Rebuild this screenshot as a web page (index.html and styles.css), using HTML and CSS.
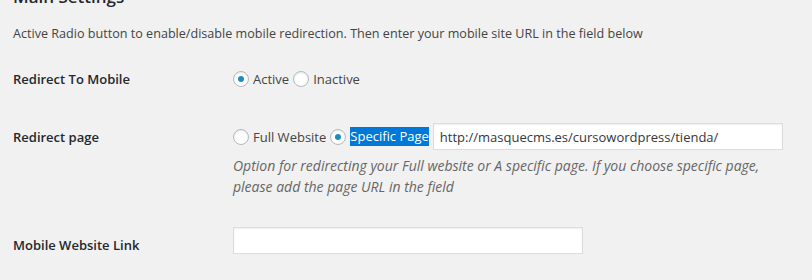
FILE: index.html
```html
<!DOCTYPE html>
<html>
    <head>
        <link rel="stylesheet" href="styles.css">
    </head>

    <body>
        <div class="wrap">
            <h2 class="title">Main Settings</h2>
            <p class="intro">
                Active Radio button to enable/disable mobile redirection. Then enter your mobile site URL in the field below
            </p>

            <table class="form-table">
                <tr>
                    <th>Redirect To Mobile</th>
                    <td>
                        <div class="line">
                            <label class="choice"><input type="radio" name="redirect" checked>Active</label>
                            <label class="choice"><input type="radio" name="redirect">Inactive</label>
                        </div>
                    </td>
                </tr>
                <tr>
                    <th>Redirect page</th>
                    <td>
                        <div class="line">
                            <label class="choice"><input type="radio" name="page">Full Website</label>
                            <label class="choice"><input type="radio" name="page" checked><span class="picked">Specific Page</span></label>
                            <input type="text" class="url" value="http://masquecms.es/cursowordpress/tienda/">
                        </div>
                        <p class="description">
                            Option for redirecting your Full website or A specific page. If you choose specific page,
                            please add the page URL in the field
                        </p>
                    </td>
                </tr>
                <tr>
                    <th>Mobile Website Link</th>
                    <td>
                        <input type="text" class="url">
                    </td>
                </tr>
            </table>
        </div>
    </body>
</html>
```

FILE: styles.css
```css
body {
    margin: 0;
    background: #f1f1f1;
    color: #444;
    font-family: "Open Sans", "Noto Sans", sans-serif;
    font-size: 13px;
    line-height: 1.4;
}

.wrap {
    padding-left: 13px;
}

.title {
    margin: -14px 0 0;
    font-size: 17px;
    font-weight: 600;
    color: #23282d;
    line-height: 1.3;
}

.intro {
    margin: 16px 0 0;
    font-size: 12.6px;
    line-height: 19px;
}

.form-table {
    border-collapse: collapse;
    margin-top: 7px;
}
.form-table th {
    width: 200px;
    padding: 20px 10px 20px 0;
    text-align: left;
    vertical-align: top;
    font-size: 13px;
    font-weight: 600;
    line-height: 18px;
    color: #23282d;
}
.form-table td {
    padding: 15px 10px;
    vertical-align: top;
    font-size: 13px;
    line-height: 20px;
}
.form-table tr:first-child td {
    padding-top: 19px;
}
.form-table tr:last-child th {
    padding-top: 24px;
}

.line {
    display: flex;
    align-items: center;
    gap: 4px;
}

.choice {
    display: inline-flex;
    align-items: center;
}

input[type=radio] {
    -webkit-appearance: none;
    appearance: none;
    width: 16px;
    height: 16px;
    margin: 0 4px 0 0;
    border: 1px solid #b4b9be;
    border-radius: 50%;
    background: #fff;
    box-shadow: inset 0 1px 2px rgba(0, 0, 0, .1);
    display: inline-flex;
    align-items: center;
    justify-content: center;
}
input[type=radio]:checked::before {
    content: "";
    width: 6px;
    height: 6px;
    border-radius: 50%;
    background: #1e8cbe;
}

.picked {
    background: #0078d7;
    color: #fff;
    line-height: 19px;
}

.url {
    box-sizing: border-box;
    width: 350px;
    height: 27px;
    margin: 0;
    padding: 3px 6px;
    border: 1px solid #ddd;
    background: #fff;
    box-shadow: inset 0 1px 2px rgba(0, 0, 0, .07);
    color: #32373c;
    font-family: inherit;
    font-size: 13px;
    outline: none;
}

.description {
    margin: 5px 0 0;
    font-style: italic;
    color: #666;
    font-size: 14px;
    line-height: 21px;
    max-width: 545px;
}
```
